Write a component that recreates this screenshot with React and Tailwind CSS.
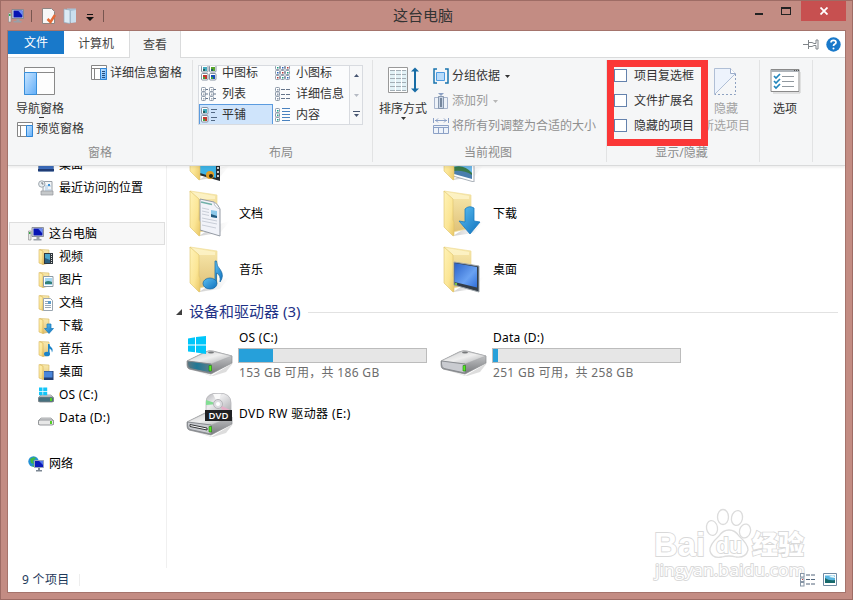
import React from 'react';

const FOLDERS = [
  ['video', ''],
  ['picture', ''],
  ['document', '文档'],
  ['download', '下载'],
  ['music', '音乐'],
  ['desktop', '桌面'],
];

const TREE = [
  { icon: 'desk', label: '桌面' },
  { icon: 'recent', label: '最近访问的位置' },
  null,
  { icon: 'computer', label: '这台电脑', root: true, selected: true },
  { icon: 'video', label: '视频' },
  { icon: 'picture', label: '图片' },
  { icon: 'document', label: '文档' },
  { icon: 'download', label: '下载' },
  { icon: 'music', label: '音乐' },
  { icon: 'desktop', label: '桌面' },
  { icon: 'os', label: 'OS (C:)', latin: true },
  { icon: 'disk', label: 'Data (D:)', latin: true },
  null,
  { icon: 'network', label: '网络', root: true },
];

function Gradients() {
  return (
    <svg width="0" height="0" className="absolute">
      <defs>
        <linearGradient id="front" x1="0" y1="0" x2="1" y2="1">
          <stop offset="0" stopColor="#fff3b8" />
          <stop offset="0.6" stopColor="#fbe594" />
          <stop offset="1" stopColor="#e9c665" />
        </linearGradient>
        <linearGradient id="back" x1="0" y1="0" x2="0" y2="1">
          <stop offset="0" stopColor="#f9eaae" />
          <stop offset="1" stopColor="#dfc178" />
        </linearGradient>
        <linearGradient id="blue" x1="0" y1="0" x2="1" y2="1">
          <stop offset="0" stopColor="#5cc0f2" />
          <stop offset="1" stopColor="#0f70bd" />
        </linearGradient>
        <linearGradient id="screen" x1="0" y1="0" x2="1" y2="1">
          <stop offset="0" stopColor="#2b62c8" />
          <stop offset="0.6" stopColor="#6aa2f2" />
          <stop offset="1" stopColor="#2f6fdc" />
        </linearGradient>
        <linearGradient id="metal" x1="0" y1="0" x2="1" y2="1">
          <stop offset="0" stopColor="#c8c9ca" />
          <stop offset="0.5" stopColor="#efefef" />
          <stop offset="1" stopColor="#a5a7aa" />
        </linearGradient>
        <linearGradient id="side" x1="0" y1="0" x2="0" y2="1">
          <stop offset="0" stopColor="#d5d6d8" />
          <stop offset="1" stopColor="#77797c" />
        </linearGradient>
        <linearGradient id="teal" x1="0" y1="0" x2="1" y2="0">
          <stop offset="0" stopColor="#5b7680" />
          <stop offset="0.4" stopColor="#1f7896" />
          <stop offset="1" stopColor="#5d7d8a" />
        </linearGradient>
        <linearGradient id="disc" x1="0" y1="0" x2="1" y2="1">
          <stop offset="0" stopColor="#b4b4b8" />
          <stop offset="0.4" stopColor="#ececee" />
          <stop offset="1" stopColor="#a9a9ad" />
        </linearGradient>
        <linearGradient id="pane" x1="0" y1="0" x2="1" y2="1">
          <stop offset="0" stopColor="#c9e5ff" />
          <stop offset="1" stopColor="#62aef8" />
        </linearGradient>
        <linearGradient id="shade" x1="0" y1="0" x2="1" y2="0">
          <stop offset="0" stopColor="#999" stopOpacity="0.5" />
          <stop offset="1" stopColor="#ccc" stopOpacity="0" />
        </linearGradient>
      </defs>
    </svg>
  );
}

function BigFolder({ kind }) {
  return (
    <svg width="48" height="48" viewBox="0 0 48 48" className="shrink-0">
      <path d="M30 35L44 31L34 43L13 46z" fill="url(#shade)" />
      <path d="M4 1L31 5V38L13 42z" fill="url(#back)" stroke="#efdc98" strokeWidth="0.7" />
      <path d="M5 1.8L29 6V9L13 9z" fill="#fff7cf" opacity="0.7" />
      {kind === 'document' && (
        <g>
          <path d="M14 9L28 12Q32 14 34 19V46L14 40z" fill="#f1f3f9" stroke="#8a919b" strokeWidth="0.9" />
          <path d="M28 12q0 5 6 7" fill="#fff" stroke="#9aa2ad" strokeWidth="0.7" />
          <path d="M15 12l11 2.500" stroke="#6fb0a8" strokeWidth="1.5" />
          <path d="M16 18l7 1.5M16 21l7 1.5M16 24l7 1.5M16 28l15 3M16 31l15 3M16 35l14 3" stroke="#c4c9d4" strokeWidth="0.9" />
          <path d="M25 20l6 1v7l-6-1z" fill="#8cc8ea" />
          <path d="M25 24l6 2v2l-6-1z" fill="#245b80" />
        </g>
      )}
      {kind === 'picture' && (
        <g>
          <path d="M13 22L34 26V48L13 42z" fill="#fff" stroke="#929ba5" strokeWidth="0.8" />
          <path d="M14 24L32 28V44L14 39z" fill="#6db8e8" />
          <path d="M14 33Q24 30 32 39V44L14 38z" fill="#397a49" />
          <path d="M14 37Q24 36 32 41V45L14 40z" fill="#4a7ead" />
        </g>
      )}
      {kind === 'video' && (
        <g>
          <path d="M13 20L34 23V47L13 41z" fill="#262c30" />
          <path d="M14 22L30 24V44L14 39z" fill="#3eb3e5" />
          <circle cx="24" cy="41" r="4" fill="#df9f27" />
          <circle cx="25" cy="42" r="2" fill="#20231a" />
          <path d="M32 25V45" stroke="#f5f5f5" strokeWidth="1.6" strokeDasharray="2 2" />
        </g>
      )}
      <path d="M4 1L13 9V30L14 32V45.500L13 46L4 37z" fill="url(#front)" stroke="#dec26b" strokeWidth="0.6" />
      {kind === 'music' && (
        <g fill="url(#blue)" stroke="#1666a1" strokeWidth="0.7">
          <path d="M29 15h1.500q0 5 4 9q4 6-.5 12q1-7-3.500-9V38H29z" />
          <ellipse cx="24" cy="37.500" rx="7" ry="5.500" />
        </g>
      )}
      {kind === 'download' && (
        <path d="M25 19Q29 15 34 18V31L40 32L30 44L19 31L25 32z" fill="url(#blue)" stroke="#1b7bc0" strokeWidth="0.8" />
      )}
      {kind === 'desktop' && (
        <g>
          <path d="M14 16L39 20V46L14 39z" fill="#333d48" stroke="#9fa6ab" />
          <path d="M14.500 17L37 21V41.500L14.500 36z" fill="url(#screen)" />
          <circle cx="16" cy="38" r="1.2" fill="#7ac343" />
        </g>
      )}
    </svg>
  );
}

function SmallIcon({ kind }) {
  const box = { width: 16, height: 16, viewBox: '0 0 16 16', className: 'shrink-0' };
  if (kind === 'computer') {
    return (
      <svg {...box}>
        <path d="M0.5 5h2.5v9H0.5z" fill="#e5e5e5" stroke="#888" strokeWidth="0.6" />
        <path d="M1 6h1.5v2H1z" fill="#35a845" />
        <path d="M4 1.5h11.5v9H4z" fill="#d8dce0" stroke="#777e88" strokeWidth="0.8" />
        <path d="M5.5 2.5h9v7h-9z" fill="#0714b4" />
        <path d="M10 2.5h4.5v5z" fill="#6d8df0" />
        <path d="M8.5 11h3v2h2v1.5h-8V13h3z" fill="#9aa0a8" />
      </svg>
    );
  }
  if (kind === 'network') {
    return (
      <svg {...box}>
        <circle cx="5.5" cy="5.500" r="5.2" fill="#2491d6" />
        <path d="M2 3q4-3 6-1l-3 3 1 3-3-1zM4 9l3 1-2 1z" fill="#42b842" />
        <path d="M6.5 4.5h9v7h-9z" fill="#0b1bbb" stroke="#9ba7b8" />
        <path d="M11 5h4v4z" fill="#5578eb" />
        <path d="M10 12h2v2h2v1.500H8V14h2z" fill="#7c8793" />
      </svg>
    );
  }
  if (kind === 'recent') {
    return (
      <svg {...box}>
        <path d="M5 1.500h9v11H5z" fill="#f3f6f8" stroke="#9aa1a8" />
        <path d="M7 6h6M7 8h3M7 10h6" stroke="#a5c5e2" />
        <path d="M10 4h2v2h-2z" fill="#3c91d6" />
        <path d="M3 11h12v4H3z" fill="#c5c8ca" stroke="#92979b" strokeWidth="0.7" />
        <circle cx="3.800" cy="4" r="3.200" fill="#e8edf0" stroke="#9fa8af" />
        <path d="M4 2v2h1.500" fill="none" stroke="#57616a" strokeWidth="0.8" />
      </svg>
    );
  }
  if (kind === 'desk') {
    return (
      <svg {...box}>
        <path d="M0.5 2.5h15v12h-15z" fill="#3c6cbd" stroke="#7890b5" />
        <path d="M0 12h16v2H0z" fill="#203c74" />
      </svg>
    );
  }
  if (kind === 'os' || kind === 'disk') {
    return (
      <svg {...box}>
        <path d="M3 8L13 8L15.5 10.5V14.5H0.5V10.5z" fill="#d6d8d9" stroke="#8d9093" strokeWidth="0.7" />
        {kind === 'os' && <path d="M1 .500h3.500v3.500H1zM5.200 .500h4v3.500h-4zM1 4.700h3.500v3.500H1zM5.200 4.700h4v3.500h-4z" fill="#12c4f7" />}
        <rect x="0.500" y="10" width="15" height="5" rx="1.500" fill={kind === 'os' ? '#47707e' : '#e8e8e8'} stroke="#808488" strokeWidth="0.8" />
        <path d="M12 11h2v3h-2z" fill="#52cf25" />
      </svg>
    );
  }
  return (
    <svg {...box}>
      <path d="M2 0.5L11 1V14L5 15.5z" fill="url(#back)" stroke="#d5b55e" strokeWidth="0.6" />
      <path d="M1 0.5L5 2V15.5L1 14z" fill="url(#front)" stroke="#d7b457" strokeWidth="0.6" />
      {kind === 'video' && (
        <g>
          <path d="M6 4h9v11H6z" fill="#30383e" />
          <path d="M7 5h5v9H7z" fill="#4aa5ca" />
          <path d="M7 9l5 2v3H7z" fill="#2b5f80" />
          <path d="M13.500 5v9" stroke="#ddd" strokeDasharray="1 1" />
        </g>
      )}
      {kind === 'picture' && (
        <g>
          <path d="M5.500 4.500h9.500v10H5.500z" fill="#fff" stroke="#8d9ba5" />
          <path d="M7 6h7v7H7z" fill="#a5d8f3" />
          <path d="M7 10q3-2 7 0v2H7z" fill="#328078" />
        </g>
      )}
      {kind === 'document' && (
        <g>
          <path d="M5.500 3.500h7l2 2v10h-9z" fill="#fff" stroke="#9aa6b0" />
          <path d="M7 6.500h3M7 8.500h6M7 10.500h6M7 12.500h6" stroke="#9aa9b8" />
          <path d="M10 6h3v3h-3z" fill="#5c9ccb" />
        </g>
      )}
      {kind === 'download' && <path d="M9 6h4v4.500h2.500L11 15.500L6.500 10.500H9z" fill="url(#blue)" stroke="#1578b9" strokeWidth="0.7" />}
      {kind === 'music' && (
        <g fill="#1b83c8">
          <path d="M10 3h1.500q0 2 2 3.500q2 2 .5 5q0-3-2.500-4V13H10z" />
          <ellipse cx="9" cy="13" rx="3" ry="2.300" />
        </g>
      )}
      {kind === 'desktop' && (
        <g>
          <path d="M6 7h9.500v9H6z" fill="#233e72" />
          <path d="M6 7.500h8.500v6H6z" fill="#4a86da" />
        </g>
      )}
    </svg>
  );
}

function Drive({ kind }) {
  return (
    <svg width="48" height="48" viewBox="0 0 48 48" className="shrink-0">
      <path d="M4 37L25 44L47 31L40 40L27 44z" fill="#bbb" opacity="0.5" />
      <path d="M1 29L19 20Q23 18 27 19L46 24V31L25 42L3 37Q1 36 1 33z" fill="url(#side)" stroke="#8b8d8f" strokeWidth="0.7" />
      <path d="M1 29L20 20Q23 18.500 27 19.500L46 24L25 32z" fill="url(#metal)" stroke="#a5a7a9" strokeWidth="0.5" />
      <path d="M1.500 29L25 32V41L4 36.500Q1.500 35 1.500 32z" fill={kind === 'os' ? 'url(#teal)' : '#c9cbd0'} stroke="#85888c" strokeWidth="0.9" />
      {kind === 'dvd' && <path d="M4 31.500L21 35V37L4 33.500z" fill="#fff" stroke="#353739" />}
      <path d="M23 33.500h2.500v5.500H23z" fill="#55ed20" stroke="#247d12" strokeWidth="0.6" />
      {kind !== 'dvd' && <ellipse cx="25" cy="20.500" rx="3" ry="1" fill="#77797b" />}
      {kind === 'os' && (
        <path d="M2 6.500L9 5.300V12.500H2zM10 5.100L20 4V12.500H10zM2 13.500H9V20.300L2 19.500zM10 13.500H20V22L10 20.500z" fill="#00c6fa" />
      )}
      {kind === 'dvd' && (
        <g>
          <path d="M20 20V9Q20 0 32.500 0Q45 0 45 10V20z" fill="url(#disc)" stroke="#b5b5b9" strokeWidth="0.8" />
          <path d="M32 11L20 7V12z" fill="#82dd93" />
          <path d="M32 11L44 17L38 19z" fill="#e5afc8" />
          <path d="M32 11L27 1H35z" fill="#fafafa" />
          <circle cx="32" cy="11" r="4.500" fill="#dcdce0" stroke="#b5b5b9" />
          <circle cx="32" cy="11" r="2" fill="#fff" />
          <path d="M19 17h27v11H19z" fill="#202123" />
          <text x="32.500" y="26" fill="#fff" fontSize="9.500" fontWeight="600" textAnchor="middle" fontFamily="Open Sans">DVD</text>
        </g>
      )}
    </svg>
  );
}

function PaneIcon({ lines }) {
  return (
    <svg width="16" height="15" viewBox="0 0 16 15" className="shrink-0">
      <path d="M.5 .5h15v14H.5zM.5 3.500h15M3.500 3.500v11" fill="#fff" stroke="#858585" />
      <path d="M9.500 3.500h6v11h-6z" fill="url(#pane)" stroke="#2e86d8" />
      {lines && <path d="M11 6.500h3M11 8.500h3M11 10.500h3M11 12.500h3" stroke="#254e7c" />}
    </svg>
  );
}

function ViewIcon({ kind }) {
  const cell = (x, y, color) => (
    <g key={`${x}-${y}`}>
      <rect x={x + 0.5} y={y + 0.5} width="4" height="4" rx="0.8" fill="#fff" stroke="#8c99a9" />
      <rect x={x + 2} y={y + 2} width="1.5" height="1.5" fill={color} />
    </g>
  );
  return (
    <svg width="16" height="16" viewBox="0 0 16 16" className="shrink-0">
      {(kind === 'medium' || kind === 'tiles') &&
        (kind === 'medium' ? [0, 8] : [0]).map((x) =>
          [0, 8].map((y) => (
            <g key={`${x}${y}`}>
              <rect x={x + 0.5} y={y + 0.5} width="6.5" height="6.5" rx="1" fill="#fff" stroke="#8591a1" />
              <path d={`M${x + 2} ${y + 2}h4v4h-4z`} fill={y ? (x ? '#174db5' : '#c3372e') : x ? '#57a52b' : '#42a9bd'} />
              <path d={`M${x + 2} ${y + 4}h2v2h-2z`} fill={y ? '#43a33d' : '#225f60'} />
            </g>
          ))
        )}
      {kind === 'small' && [0, 5, 10].map((x) => [0, 5, 10].map((y) => cell(x, y, ['#1d9c82', '#2b65bd', '#b63b3b'][((x + y) / 5) % 3])))}
      {kind === 'list' && [0, 8].map((x) => [1, 5.5, 10].map((y) => cell(x, y, '#a6afba')))}
      {kind === 'list' && <path d="M5 3.500h2M5 8h2M5 12.500h2M13 3.500h2M13 8h2M13 12.500h2" stroke="#68788f" />}
      {(kind === 'details' || kind === 'content') && [1, 5.5, 10].map((y) => cell(0, y, kind === 'content' ? '#18a389' : '#8e9aad'))}
      {kind === 'details' && <path d="M6 3.500h4M11 3.500h4M6 8.500h4M11 8.500h4M6 12.500h4M11 12.500h4" stroke="#65758b" />}
      {kind === 'content' && <path d="M7 1.500h8M7 4.500h8M7 7.500h8M7 10.500h8M7 13.500h8" stroke="#4a82bf" />}
      {kind === 'tiles' && <path d="M10 2.500h6M10 5.500h4M10 10.500h6M10 13.500h4" stroke="#526985" />}
    </svg>
  );
}

function ViewOption({ icon, label, selected }) {
  return (
    <div className={`flex h-[21px] items-center gap-[5px] border pl-px ${selected ? 'border-[#5b9bdf] bg-[#cfe4fb]' : 'border-transparent'}`}>
      <ViewIcon kind={icon} />
      <span>{label}</span>
    </div>
  );
}

function Caret({ className = '' }) {
  return (
    <svg width="5" height="3" viewBox="0 0 5 3" className={`shrink-0 ${className}`}>
      <path d="M0 0h5L2.500 3z" fill="currentColor" />
    </svg>
  );
}

function Group({ title, className, titleClass = '', children }) {
  return (
    <section className={`flex h-[102px] shrink-0 flex-col border-r border-[#e2e3e4] ${className}`}>
      <div className="h-[85px]">{children}</div>
      <div className={`text-center leading-[18px] text-[#8b8b8b] ${titleClass}`}>{title}</div>
    </section>
  );
}

function TitleBar() {
  return (
    <header className="flex h-[30px] shrink-0 items-start text-[#333]">
      <div className="flex h-[30px] w-[370px] items-center pl-[7px]">
        <SmallIcon kind="computer" />
        <i className="ml-[7px] h-3 w-px bg-[#785650]" />
        <svg width="16" height="16" viewBox="0 0 16 16" className="ml-[10px]">
          <path d="M.5 .5h9l3 3v12H.5z" fill="#f7f7f7" stroke="#8d8582" />
          <path d="M5.500 11l3 3 4.500-7" fill="none" stroke="#e56b37" strokeWidth="2.500" />
        </svg>
        <svg width="16" height="16" viewBox="0 0 16 16" className="ml-[5px]">
          <path d="M4 .5h9v14H4z" fill="#a9c2d6" />
          <path d="M1 1l6 1v13.500l-6-1z" fill="#dceaf4" stroke="#8faabd" strokeWidth="0.7" />
          <path d="M8 3l5-1v12l-5 1z" fill="#cadeed" />
        </svg>
        <svg width="8" height="7" viewBox="0 0 8 7" className="mt-[3px] ml-[7px]">
          <path d="M1 .5h6" stroke="#111" />
          <path d="M0 3h8L4 7z" fill="#111" />
        </svg>
        <i className="ml-[9px] h-3 w-px bg-[#785650]" />
      </div>
      <h1 className="w-[104px] text-center text-[15px] leading-[29px]">这台电脑</h1>
      <div className="ml-auto flex text-[#222]">
        <div className="flex h-5 w-[26px] items-end justify-center pb-[6px]"><i className="h-[2px] w-2 bg-[#222]" /></div>
        <div className="flex h-5 w-[27px] items-center justify-center pb-px"><i className="h-2 w-[10px] border border-t-2 border-[#222]" /></div>
        <div className="mr-[6px] ml-[2px] flex h-5 w-[45px] items-center justify-center bg-[#c75050]">
          <svg width="8" height="8" viewBox="0 0 8 8"><path d="M.5 .5l7 7M7.500 .5l-7 7" stroke="#fff" strokeWidth="1.8" /></svg>
        </div>
      </div>
    </header>
  );
}

function Tabs() {
  return (
    <nav className="flex h-[27px] shrink-0 border-b border-[#dadbdc] bg-white text-[#444]">
      <div className="h-[23px] w-[56px] bg-[#1979ca] text-center leading-[23px] text-white">文件</div>
      <div className="w-[65px] pr-px text-center leading-[26px]">计算机</div>
      <div className="h-[27px] w-[52px] border-x border-[#dadbdc] bg-[#f5f6f7] text-center leading-[27px]">查看</div>
      <div className="ml-auto flex items-center gap-[7px] pr-[4px]">
        <svg width="16" height="11" viewBox="0 0 16 11" fill="#fff" stroke="#80858a">
          <path d="M0 5.500h5M5.500 1v9M6 3.500h3l2 1h2V1h2v9h-2V6.500h-2l-2 1H6" />
        </svg>
        <svg width="15" height="15" viewBox="0 0 15 15">
          <circle cx="7.500" cy="7.500" r="7.200" fill="#1979ca" />
          <path d="M5 5.500Q5 3.300 7.500 3.300T10 5.500Q10 6.500 8.500 7.300Q7.500 8 7.500 9" fill="none" stroke="#fff" strokeWidth="1.700" />
          <circle cx="7.500" cy="11.500" r="1" fill="#fff" />
        </svg>
      </div>
    </nav>
  );
}

function Ribbon() {
  return (
    <div className="relative z-10 flex h-[108px] shrink-0 border-b border-[#d9dadb] bg-[#f5f6f7] pt-[2px] leading-[18px] text-[#333] shadow-[0_2px_2px_rgba(0,0,0,0.06)]">
      <Group title="窗格" className="w-[185px]">
        <div className="flex pt-[5px] pl-2">
          <div className="w-[75px]">
            <svg width="32" height="29" viewBox="0 0 32 29" className="mt-[2px] ml-2">
              <path d="M.5 .5h30v27H.5zM.5 5.500h30" fill="#fdfdfd" stroke="#898989" />
              <path d="M.5 5.500h12v22H.5z" fill="url(#pane)" stroke="#398fda" />
            </svg>
            <p className="mt-1">导航窗格</p>
            <i className="mt-[-1px] ml-[23px] block h-px w-[5px] bg-[#333]" />
            <div className="mt-[2px] flex items-center gap-[3px] pl-px whitespace-nowrap"><PaneIcon />预览窗格</div>
          </div>
          <div className="flex h-[15px] items-center gap-[3px] whitespace-nowrap"><PaneIcon lines />详细信息窗格</div>
        </div>
      </Group>

      <Group title="布局" className="w-[180px] pl-[5px]" titleClass="pr-[8px]">
        <div className="mt-[5px] flex h-[60px] w-[165px] overflow-hidden border border-[#d8dbe0] bg-[#fbfcfd]">
          <div className="mt-[-4px] grid w-[150px] grid-cols-[74px_76px] content-start">
            <ViewOption icon="medium" label="中图标" />
            <ViewOption icon="small" label="小图标" />
            <ViewOption icon="list" label="列表" />
            <ViewOption icon="details" label="详细信息" />
            <ViewOption icon="tiles" label="平铺" selected />
            <ViewOption icon="content" label="内容" />
          </div>
          <div className="flex flex-1 flex-col items-center border-l border-[#d8dbe0] bg-[#f7f8f9]">
            <Caret className="mt-[8px] rotate-180 text-[#465570]" />
            <Caret className="mt-[17px] text-[#b6bbc4]" />
            <i className="mt-[14px] h-px w-[7px] bg-[#465570]" />
            <Caret className="mt-[2px] text-[#465570]" />
          </div>
        </div>
      </Group>

      <Group title="当前视图" className="w-[234px]" titleClass="pr-[3px]">
        <div className="flex pt-[7px] pl-[5px]">
          <div className="flex w-[50px] flex-col items-center">
            <svg width="31" height="28" viewBox="0 0 31 28">
              <path d="M.5 .5h19v25H.5z" fill="#fff" stroke="#999" />
              <path d="M2 3h5v21H2zM8 3h5v21H8zM14 3h5v21h-5z" fill="#e2f2f6" />
              <path d="M2 3.500h16M2 7.500h16M2 11.500h16M2 15.500h16M2 19.500h16M2 23.500h16" stroke="#a3aeb5" strokeDasharray="5 1" />
              <path d="M27 2v22" stroke="#176ca5" strokeWidth="2" />
              <path d="M23 4.500l4-4 4 4zM23 21.500l4 4 4-4z" fill="#176ca5" />
            </svg>
            <p className="mt-[5px]">排序方式</p>
            <Caret className="mt-[-1px]" />
          </div>
          <div className="ml-[5px] flex flex-col gap-[7px]">
            <div className="flex h-[18px] items-center gap-[3px]">
              <svg width="16" height="16" viewBox="0 0 16 16">
                <path d="M4 1H1v14h3M12 1h3v14h-3" fill="none" stroke="#1974ae" strokeWidth="1.500" />
                <path d="M3.500 4.500h8v8h-8z" fill="#b9dcfb" stroke="#4c9be2" />
              </svg>
              分组依据<Caret className="ml-[2px]" />
            </div>
            <div className="flex h-[18px] items-center gap-[3px] text-[#9a9a9a]">
              <svg width="16" height="17" viewBox="0 0 16 17">
                <path d="M1.500 4.500h13v11h-13z" fill="#edf2f8" stroke="#a8b5cd" />
                <path d="M5.500 3.500h5v12h-5z" fill="#c8d4e5" stroke="#8797ad" />
                <path d="M8 5v9" stroke="#75869c" strokeWidth="2" />
                <path d="M5 0h6L8 3z" fill="#8ba0c3" />
              </svg>
              添加列<Caret className="ml-[2px] text-[#b7b7b7]" />
            </div>
            <div className="flex h-[18px] items-center gap-[3px] whitespace-nowrap text-[#8f8f8f]">
              <svg width="16" height="16" viewBox="0 0 16 16" fill="none" stroke="#8ca1c6">
                <path d="M.5 0v5M15.500 0v5M2 2.500h12M5 .5l-2 2 2 2M11 .5l2 2-2 2" />
                <path d="M.5 7.500h15v8H.5zM.5 9.500h15M5.500 9v6M10.500 9v6" fill="#eef3fa" />
              </svg>
              将所有列调整为合适的大小
            </div>
          </div>
        </div>
      </Group>

      <Group title="显示/隐藏" className="w-[153px]" titleClass="pr-[3px]">
        <div className="flex pt-[6px] pl-[7px]">
          <div className="flex flex-col gap-[7px]">
            {['项目复选框', '文件扩展名', '隐藏的项目'].map((label) => (
              <label key={label} className="flex h-[18px] w-[82px] items-center gap-[7px] whitespace-nowrap">
                <i className="size-[13px] border border-[#6482ad] bg-white" />
                <span className="pt-px">{label}</span>
              </label>
            ))}
          </div>
          <div className="flex w-[60px] shrink-0 flex-col items-center text-[#a2a2a2]">
            <svg width="24" height="28" viewBox="0 0 24 28" className="mt-[2px] mb-[4px]">
              <path d="M.5 .5h16l5 5L.5 26.500z" fill="#edf3fc" stroke="#b0bfd6" />
              <path d="M16.500 .5v5h5" fill="#fff" stroke="#9cadca" />
              <path d="M21.500 6v20.500H1" fill="none" stroke="#8da1c1" strokeDasharray="2 2" />
            </svg>
            <p>隐藏</p>
            <p className="mt-[-1px]">所选项目</p>
          </div>
        </div>
      </Group>

      <Group title="" className="w-[53px]">
        <div className="flex flex-col items-center pt-[9px] pr-[2px]">
          <svg width="31" height="25" viewBox="0 0 31 25">
            <path d="M1 .5h28v22H1z" fill="#fff" stroke="#8a8a8a" />
            <path d="M1 1h28v2H1z" fill="#aeb4ba" />
            <path d="M24 1.500h5" stroke="#555" strokeDasharray="1 1" />
            <path d="M30 3v21H3" fill="none" stroke="#c9c9c9" />
            <path d="M12 7.500h12M12 12.500h12M12 17.500h12" stroke="#91999f" />
            <path d="M4 7l2 2 4-4M4 12l2 2 4-4M4 17l2 2 4-4" fill="none" stroke="#2387bd" strokeWidth="1.700" />
          </svg>
          <p className="mt-[6px]">选项</p>
        </div>
      </Group>

      {/* highlight frame drawn over the check boxes */}
      <div className="absolute top-[2px] left-[599px] h-[86px] w-[101px] border-[7px] border-[#fb3737]" />
    </div>
  );
}

function Sidebar() {
  return (
    <aside className="w-[159px] shrink-0 overflow-hidden border-r border-[#f0f0f0]">
      <ul className="mt-[-13px] pl-px">
        {TREE.map((row, i) =>
          row ? (
            <li
              key={i}
              className={`flex h-[23px] w-[156px] items-center gap-[5px] border whitespace-nowrap ${row.root ? 'pl-[18px]' : 'pl-[28px]'} ${row.selected ? 'border-[#dedede] bg-[#f7f7f7]' : 'border-transparent'}`}
            >
              <SmallIcon kind={row.icon} />
              <span className={row.latin ? 'tracking-[0.25px]' : ''}>{row.label}</span>
            </li>
          ) : (
            <li key={i} className="h-[23px]" />
          )
        )}
      </ul>
    </aside>
  );
}

function DriveTile({ icon, name, used, detail }) {
  return (
    <div className="flex h-14 gap-[4px]">
      <span className="pt-[4px]"><Drive kind={icon} /></span>
      <div className="w-[189px]">
        <p className="pl-px leading-[20px] tracking-[0.25px]">{name}</p>
        <div className="h-[15px] border border-[#bcbcbc] bg-[#e6e6e6]">
          <div className="h-full bg-[#26a0da]" style={{ width: used }} />
        </div>
        <p className="mt-px pl-px leading-[18px] tracking-[0.32px] whitespace-nowrap text-[#6d6d6d]">{detail}</p>
      </div>
    </div>
  );
}

function Content() {
  return (
    <main className="flex-1 overflow-hidden">
      <div className="mt-[-36px] grid grid-cols-[254px_254px] pl-[19px]">
        {FOLDERS.map(([kind, label]) => (
          <div key={kind} className="flex h-14 items-center gap-[5px]">
            <BigFolder kind={kind} />
            <span>{label}</span>
          </div>
        ))}
      </div>
      <div className="flex h-[28px] items-center pr-[7px] pl-[9px]">
        <svg width="6" height="6" viewBox="0 0 6 6"><path d="M6 0v6H0z" fill="#404040" /></svg>
        <h2 className="mt-[-1px] ml-[7px] text-[15px] whitespace-nowrap text-[#1e3287]">设备和驱动器 (3)</h2>
        <i className="mt-px ml-[8px] h-px flex-1 bg-[#e2e2e2]" />
      </div>
      <div className="grid grid-cols-[254px_254px] pt-[2px] pl-[19px]">
        <DriveTile icon="os" name="OS (C:)" used="34px" detail="153 GB 可用，共 186 GB" />
        <DriveTile icon="disk" name="Data (D:)" used="5px" detail="251 GB 可用，共 258 GB" />
        <div className="mt-[6px] flex h-14 gap-[5px]">
          <span className="pt-[3px]"><Drive kind="dvd" /></span>
          <span className="leading-[48px] tracking-[0.4px]">DVD RW 驱动器 (E:)</span>
        </div>
      </div>
    </main>
  );
}

function Watermark() {
  return (
    <svg width="160" height="76" viewBox="0 0 160 76" className="absolute top-[506px] left-[650px]">
      <g fill="#fff" stroke="#dcdcdc" strokeWidth="1.3">
        <ellipse cx="61" cy="21" rx="5.5" ry="7.5" transform="rotate(-10 61 21)" />
        <ellipse cx="72" cy="10" rx="5.5" ry="7.5" />
        <ellipse cx="86" cy="11" rx="5.5" ry="7.5" transform="rotate(12 86 11)" />
        <ellipse cx="94" cy="24" rx="5.5" ry="7" transform="rotate(15 94 24)" />
        <path d="M78 23Q84 23 88 29Q97 37 97 43Q95 51 85 50Q78 48 71 50Q61 52 59 44Q58 38 68 29Q72 23 78 23z" />
      </g>
      <g fill="#fff" stroke="#d9d9d9" strokeWidth="1.8" paintOrder="stroke" fontFamily="Liberation Sans, sans-serif">
        <text x="3" y="49" fontSize="34" fontWeight="700" textLength="51" lengthAdjust="spacingAndGlyphs">Bai</text>
        <text x="65" y="46" fontSize="22" fontWeight="700" textLength="26" lengthAdjust="spacingAndGlyphs">du</text>
        <text x="101" y="47" fontSize="26" fontWeight="900" textLength="52" fontFamily="Noto Sans CJK SC, sans-serif">经验</text>
        <text x="4" y="69" fontSize="17" textLength="150" lengthAdjust="spacingAndGlyphs" fontFamily="Open Sans, sans-serif">jingyan.baidu.com</text>
      </g>
    </svg>
  );
}

function StatusBar() {
  return (
    <footer className="flex h-[24px] shrink-0 items-center pr-[8px] pl-[14px] text-[#1e395b]">
      <span className="tracking-[0.3px]">9 个项目</span>
      <i className="ml-[10px] h-3 w-px bg-[#eee]" />
      <div className="relative z-10 ml-auto flex gap-[8px]">
        <svg width="15" height="14" viewBox="0 0 15 14">
          {[0, 4.5, 9].map((y) => (
            <g key={y}>
              <rect x=".5" y={y + 0.5} width="3.5" height="3.5" fill="#fff" stroke="#8796a6" />
              <path d={`M6 ${y + 2}h4M11 ${y + 2}h4`} stroke="#52657b" />
            </g>
          ))}
          <path d="M2 6h1v1H2z" fill="#d23b3b" />
        </svg>
        <svg width="14" height="13" viewBox="0 0 14 13">
          <path d="M.5 .5h13v12H.5z" fill="#fff" stroke="#708aa2" />
          <path d="M2 2.500h10v7.500H2z" fill="#58b5e1" />
          <path d="M2 5q4 3 10 2v3H2z" fill="#17696b" />
          <path d="M6 4q4-3 6 0v1z" fill="#e9f9fb" />
        </svg>
      </div>
    </footer>
  );
}

export default function App() {
  return (
    <div className="relative flex h-[600px] w-[853px] flex-col overflow-hidden border border-[#9e6c65] bg-[#c38c83] text-[12px] text-black [font-family:'Noto_Sans','Noto_Sans_CJK_SC',sans-serif]">
      <Gradients />
      <TitleBar />
      <div className="mx-[7px] mb-[7px] flex min-h-0 flex-1 flex-col bg-white outline outline-[#a5746c]">
        <Tabs />
        <Ribbon />
        <div className="flex min-h-0 flex-1">
          <Sidebar />
          <Content />
        </div>
        <StatusBar />
      </div>
      <Watermark />
    </div>
  );
}
